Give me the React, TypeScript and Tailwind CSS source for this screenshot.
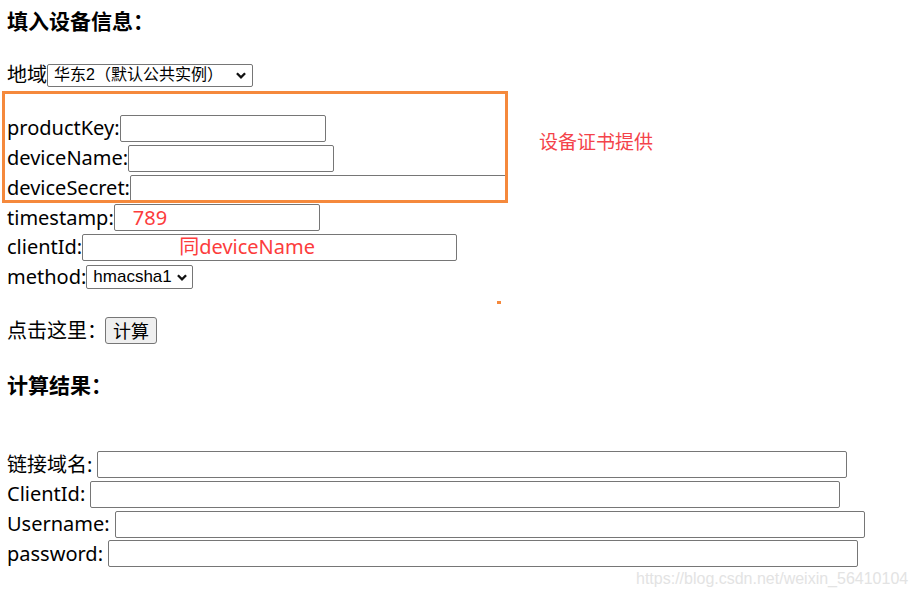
import React from 'react';

const font = { fontFamily: '"Noto Sans", "Noto Sans CJK SC", sans-serif' };

function Field({ w, className = '' }: { w: string; className?: string }) {
  return <input type="text" className={`h-[27px] rounded-[2px] border border-[#767676] bg-white outline-none ${w} ${className}`} />;
}

function Chevron() {
  return (
    <svg width="14" height="14" viewBox="0 0 24 24" fill="none" stroke="#111" strokeWidth="4" aria-hidden="true">
      <path d="m5 9 7 7 7-7" />
    </svg>
  );
}

function FakeSelect({ label, w, h, chevX, size }: { label: string; w: string; h: string; chevX: string; size: string }) {
  return (
    <div className={`relative flex items-center rounded-[2px] border border-[#767676] bg-white pl-[6px] leading-none text-black ${size} ${w} ${h}`}>
      <span style={{ fontFamily: '"Liberation Sans", "Noto Sans CJK SC", sans-serif' }}>{label}</span>
      <span className={`absolute top-1/2 -translate-y-1/2 ${chevX}`}>
        <Chevron />
      </span>
    </div>
  );
}

export default function App() {
  return (
    <div className="relative h-[595px] w-[917px] overflow-hidden bg-white text-[20px] text-black" style={font}>
      <div className="flex h-[44px] items-center pl-[7px] text-[21px] font-bold">填入设备信息：</div>

      <div className="mt-[16px] flex h-[30px] items-center pl-[7px]">
        <span className="leading-none">地域</span>
        <FakeSelect label="华东2（默认公共实例）" w="w-[206px]" h="h-[23px]" chevX="left-[186px]" size="text-[16px]" />
      </div>

      <div className="ml-[2px] mt-[1px] h-[112px] w-[506px] overflow-hidden border-[3px] border-[#f5893c] pl-[2px] pt-[19px]">
        <div className="flex h-[30px] items-center whitespace-nowrap">
          productKey:<Field w="w-[206px]" />
        </div>
        <div className="flex h-[30px] items-center whitespace-nowrap">
          deviceName:<Field w="w-[206px]" />
        </div>
        <div className="flex h-[30px] items-center whitespace-nowrap">
          deviceSecret:<Field w="w-[420px]" className="shrink-0" />
        </div>
      </div>

      <div className="flex h-[29px] items-center pl-[7px]">
        timestamp:
        <div className="relative">
          <Field w="w-[206px]" />
          <span className="absolute left-[19px] top-1/2 -translate-y-1/2 text-[20px] text-[#fc3c3c]">789</span>
        </div>
      </div>
      <div className="flex h-[30px] items-center pl-[7px]">
        clientId:
        <div className="relative">
          <Field w="w-[375px]" />
          <span className="absolute left-[97px] top-1/2 -translate-y-1/2 whitespace-nowrap text-[20px] text-[#fc3c3c]">同deviceName</span>
        </div>
      </div>
      <div className="flex h-[29px] items-center pl-[7px]">
        method:
        <FakeSelect label="hmacsha1" w="w-[107px]" h="h-[24px]" chevX="left-[88px]" size="text-[17px]" />
      </div>

      <div className="mt-[25px] flex h-[29px] items-center pl-[7px]">
        点击这里：
        <button type="button" className="-ml-[2px] h-[27px] w-[52px] rounded-[3px] border border-[#767676] bg-[#efefef] text-[18px] leading-none">
          计算
        </button>
      </div>

      <div className="mt-[27px] flex h-[28px] items-center pl-[7px] text-[21px] font-bold">计算结果：</div>

      <div className="mt-[50px] flex h-[29px] items-center pl-[7px]">
        链接域名:<Field w="w-[750px]" className="ml-[5px]" />
      </div>
      <div className="flex h-[30px] items-center pl-[7px]">
        ClientId:<Field w="w-[750px]" className="ml-[5px]" />
      </div>
      <div className="flex h-[30px] items-center pl-[7px]">
        Username:<Field w="w-[750px]" className="ml-[5px]" />
      </div>
      <div className="flex h-[29px] items-center pl-[7px]">
        password:<Field w="w-[750px]" className="ml-[5px]" />
      </div>

      <div className="absolute left-[539px] top-[128px] text-[19px] text-[#f4434a]">设备证书提供</div>
      <div className="absolute left-[497px] top-[301px] h-[3px] w-[4px] bg-[#f5893c]" />
      <div
        className="absolute left-[636px] top-[567px] whitespace-nowrap text-[16px] text-[#e3e3e3]"
        style={{ fontFamily: '"Liberation Sans", Arial, sans-serif' }}
      >
        https://blog.csdn.net/weixin_56410104
      </div>
    </div>
  );
}
